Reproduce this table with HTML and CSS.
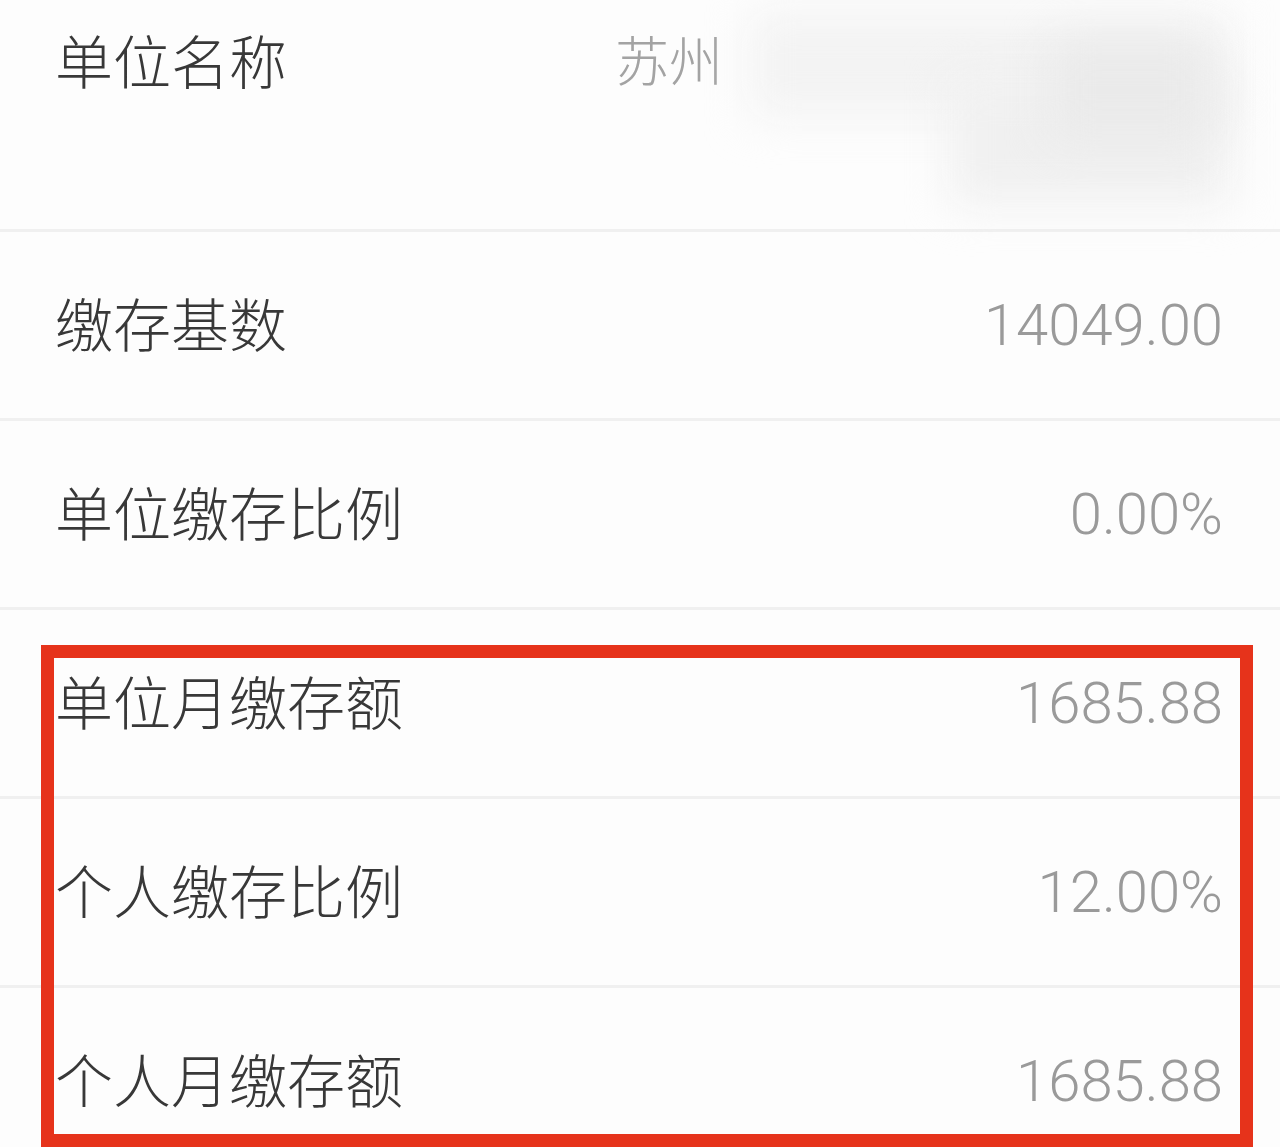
FILE: index.html
```html
<!DOCTYPE html>
<html lang="zh-CN">
<head>
    <meta charset="UTF-8">
    <meta name="viewport" content="width=device-width, initial-scale=1.0">
    <title>缴存信息</title>
    <link rel="stylesheet" href="styles.css">
</head>
<body>
    <div class="list">
        <div class="row row-top">
            <span class="label">单位名称</span>
            <span class="value value-name">苏州</span>
            <!-- 打码区域 -->
            <div class="mosaic">
                <div class="blob blob-a"></div>
                <div class="blob blob-b"></div>
                <div class="blob blob-c"></div>
            </div>
        </div>
        <div class="row">
            <span class="label">缴存基数</span>
            <span class="value">14049.00</span>
        </div>
        <div class="row">
            <span class="label">单位缴存比例</span>
            <span class="value">0.00%</span>
        </div>
        <div class="row">
            <span class="label">单位月缴存额</span>
            <span class="value">1685.88</span>
        </div>
        <div class="row">
            <span class="label">个人缴存比例</span>
            <span class="value">12.00%</span>
        </div>
        <div class="row row-last">
            <span class="label">个人月缴存额</span>
            <span class="value">1685.88</span>
        </div>

        <!-- 红色标注框 -->
        <div class="highlight"></div>
    </div>
</body>
</html>
```

FILE: styles.css
```css
body {
    margin: 0;
    background: #fdfdfd;
    font-family: "Noto Sans CJK SC", "Noto Sans", sans-serif;
    overflow: hidden;
}

.list {
    position: relative;
    height: 1147px;
    overflow: hidden;
}

/* 每一行 */
.row {
    position: relative;
    display: flex;
    justify-content: space-between;
    align-items: center;
    height: 186px;
    padding: 0 57px 0 55px;
    border-bottom: 3px solid #f0f0f0;
}

.row-top {
    height: 229px;
    align-items: flex-start;
    justify-content: flex-start;
}

.row-top .label,
.row-top .value {
    margin-top: 24px;
}

.row-last {
    border-bottom: none;
}

.label {
    font-size: 58px;
    line-height: 70px;
    padding-bottom: 6px;
    color: #383838;
    font-weight: 300;
}

.value {
    font-family: Roboto, "Noto Sans", "Noto Sans CJK SC", sans-serif;
    font-weight: 300;
    font-size: 58px;
    line-height: 70px;
    color: #9a9a9a;
}

.value-name {
    font-family: "Noto Sans CJK SC", sans-serif;
    font-weight: 300;
    color: #a3a3a3;
    font-size: 54px;
    margin-left: 328px;
}

/* 模糊遮挡 */
.mosaic {
    position: absolute;
    left: 730px;
    top: 0;
    width: 550px;
    height: 228px;
}

.blob {
    position: absolute;
    filter: blur(22px);
}

.blob-a {
    left: 20px;
    top: 12px;
    width: 480px;
    height: 105px;
    background: #f3f3f3;
}

.blob-b {
    left: 220px;
    top: 80px;
    width: 280px;
    height: 125px;
    background: #f0f0f0;
}

.blob-c {
    left: 320px;
    top: 40px;
    width: 160px;
    height: 100px;
    background: #eaeaea;
}

/* 红色标注框 */
.highlight {
    position: absolute;
    left: 41px;
    top: 645px;
    width: 1186px;
    height: 476px;
    border: 13px solid #e6331b;
}
```
